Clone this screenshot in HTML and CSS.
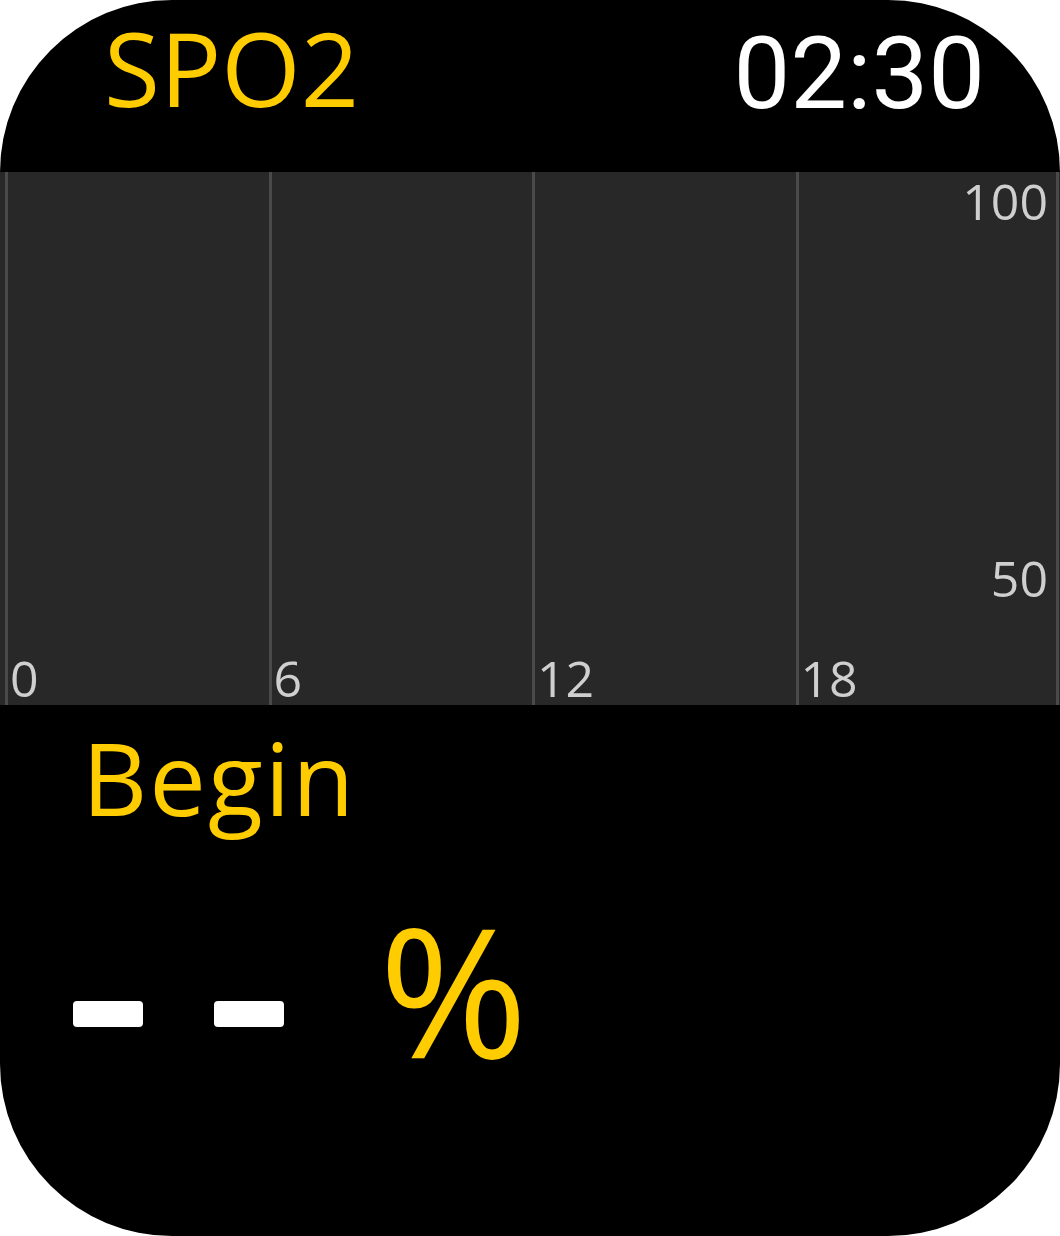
FILE: index.html
```html
<!DOCTYPE html>
<html>
<head>
  <meta charset="UTF-8">
  <title>SPO2</title>
  <link rel="stylesheet" href="styles.css">
</head>
<body>
  <div class="watch">
    <div class="header">
      <span class="title">SPO2</span>
      <span class="clock">02:30</span>
    </div>

    <div class="chart">
      <div class="col"><span class="x-label">0</span></div>
      <div class="col"><span class="x-label">6</span></div>
      <div class="col"><span class="x-label">12</span></div>
      <div class="col last">
        <span class="y-label">100</span>
        <span class="y-label mid">50</span>
        <span class="x-label">18</span>
      </div>
    </div>

    <div class="result">
      <div class="begin">Begin</div>
      <div class="value">
        <span class="dash" aria-label="-"></span>
        <span class="dash" aria-label="-"></span>
        <span class="unit">%</span>
      </div>
    </div>
  </div>
</body>
</html>
```

FILE: styles.css
```css
html, body {
  margin: 0;
  padding: 0;
  background: #ffffff;
}

.watch {
  width: 1060px;
  height: 1236px;
  background-color: #000000;
  border-radius: 172px;
  display: flex;
  flex-direction: column;
  font-family: 'Open Sans', 'Noto Sans', sans-serif;
}

.header {
  height: 172px;
  box-sizing: border-box;
  display: flex;
  justify-content: space-between;
  align-items: flex-start;
  padding: 2px 75px 0 104px;
}

.title {
  font-size: 102px;
  line-height: 1.3;
  color: #FFCC00;
}

.clock {
  margin-top: 11px;
  font-family: Roboto, 'Liberation Sans', sans-serif;
  font-size: 101px;
  line-height: 1.2;
  color: #ffffff;
}

.chart {
  height: 533px;
  box-sizing: border-box;
  display: grid;
  grid-template-columns: repeat(4, 1fr);
  padding: 0 1px 0 5px;
  background-color: #282828;
}

.col {
  display: flex;
  flex-direction: column;
  justify-content: flex-end;
  border-left: 3px solid #4a4a4a;
  padding: 0 8px 2px 2px;
}

.col.last {
  border-right: 3px solid #4a4a4a;
}

.x-label,
.y-label {
  font-size: 50px;
  line-height: 1;
  color: #cfcfcf;
}

.y-label {
  align-self: flex-end;
}

.col.last .y-label:first-child {
  margin-top: 4px;
}

.y-label.mid {
  margin-top: auto;
  margin-bottom: 50px;
}

.result {
  flex: 1;
  display: flex;
  flex-direction: column;
}

.begin {
  margin-top: 22px;
  padding-left: 82px;
  font-size: 101px;
  line-height: 1;
  letter-spacing: 2px;
  color: #FFCC00;
}

.value {
  margin-top: 71px;
  display: flex;
  align-items: flex-start;
  padding-left: 73px;
  gap: 71px;
}

.dash {
  width: 70px;
  height: 26px;
  margin-top: 102px;
  background-color: #ffffff;
  border-radius: 4px;
}

.unit {
  margin-left: 24px;
  font-size: 180px;
  line-height: 1;
  color: #FFCC00;
}
```
